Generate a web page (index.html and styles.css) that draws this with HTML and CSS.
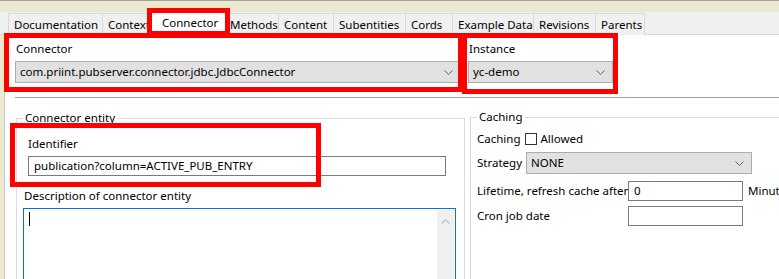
FILE: index.html
```html
<!DOCTYPE html>
<html>
<head>
<meta charset="utf-8">
<link rel="stylesheet" href="styles.css">
</head>
<body>
<div class="window">
  <div class="titlebar"></div>
  <div class="tabstrip">
    <div class="tab t-doc">Documentation</div>
    <div class="tab t-ctx">Context</div>
    <div class="tab t-con selected">Connector</div>
    <div class="tab t-met">Methods</div>
    <div class="tab t-cnt">Content</div>
    <div class="tab t-sub">Subentities</div>
    <div class="tab t-crd">Cords</div>
    <div class="tab t-exa">Example Data</div>
    <div class="tab t-rev">Revisions</div>
    <div class="tab t-par">Parents</div>
  </div>
  <div class="body">
    <div class="leftstrip"></div>
    <div class="page">
      <div class="row1">
        <div class="field f-connector">
          <div class="label">Connector</div>
          <div class="combo"><span>com.priint.pubserver.connector.jdbc.JdbcConnector</span><svg class="chev" width="9" height="5" viewBox="0 0 9 5"><path d="M0.5 0.5 L4.5 4.5 L8.5 0.5" fill="none" stroke="#606060" stroke-width="1"/></svg></div>
        </div>
        <div class="field f-instance">
          <div class="label">Instance</div>
          <div class="combo"><span>yc-demo</span><svg class="chev" width="9" height="5" viewBox="0 0 9 5"><path d="M0.5 0.5 L4.5 4.5 L8.5 0.5" fill="none" stroke="#606060" stroke-width="1"/></svg></div>
        </div>
      </div>
      <div class="sep"></div>
      <div class="groups">
        <fieldset class="grp entity">
          <legend>Connector entity</legend>
          <div class="ident">
            <div class="label">Identifier</div>
            <div class="input wide">publication?column=ACTIVE_PUB_ENTRY</div>
          </div>
          <div class="label desc">Description of connector entity</div>
          <div class="textarea">
            <div class="caret"></div>
            <div class="vscroll"><svg width="9" height="5" viewBox="0 0 9 5"><path d="M0.5 4.5 L4.5 0.8 L8.5 4.5" fill="none" stroke="#c0c0c0" stroke-width="1.4"/></svg></div>
          </div>
        </fieldset>
        <fieldset class="grp caching">
          <legend>Caching</legend>
          <div class="crow r-cache"><span class="label">Caching</span><span class="check"></span><span class="label">Allowed</span></div>
          <div class="crow r-strat"><span class="label">Strategy</span><div class="combo strat"><span>NONE</span><svg class="chev" width="9" height="5" viewBox="0 0 9 5"><path d="M0.5 0.5 L4.5 4.5 L8.5 0.5" fill="none" stroke="#606060" stroke-width="1"/></svg></div></div>
          <div class="crow r-life"><span class="label fixed">Lifetime, refresh cache after</span><div class="input small">0</div><span class="label unit">Minutes</span></div>
          <div class="crow r-cron"><span class="label fixed">Cron job date</span><div class="input small"></div></div>
        </fieldset>
      </div>
    </div>
  </div>
  <div class="mark m-tab"></div>
  <div class="mark m-conn"></div>
  <div class="mark m-inst"></div>
  <div class="mark m-ident"></div>
</div>
</body>
</html>
```
FILE: styles.css
```css
* { box-sizing: border-box; }
html, body { margin: 0; padding: 0; background: #fff; }
body {
  font-family: "Noto Sans", "Open Sans", sans-serif;
  font-size: 11.5px;
  color: #000;
}
.window {
  position: relative;
  width: 779px;
  height: 279px;
  overflow: hidden;
  background: #fff;
}
.titlebar {
  height: 12px;
  border-top: 1px solid #a0a0a0;
  background: #ede9cf;
}
.tabstrip {
  display: flex;
  align-items: flex-end;
  height: 23px;
  padding-left: 8px;
  background: #f0f0f0;
  border-bottom: 1px solid #d9d9d9;
}
.tab {
  flex: none;
  height: 22px;
  line-height: 21px;
  border: 1px solid #d9d9d9;
  border-bottom: none;
  background: #f0f0f0;
  margin-right: -1px;
  padding-left: 5px;
  white-space: nowrap;
  overflow: hidden;
  color: #000;
  margin-bottom: -1px;
}
.t-doc { width: 95px; }
.t-ctx { width: 52px; }
.t-con { width: 77px; }
.t-met { width: 55px; }
.t-cnt { width: 56px; }
.t-sub { width: 73px; }
.t-crd { width: 48px; }
.t-exa { width: 82px; }
.t-rev { width: 63px; }
.t-par { width: 50px; }
.tab.selected {
  position: relative;
  z-index: 1;
  height: 25px;
  line-height: 19px;
  padding-top: 2px;
  background: #fff;
  margin-left: -3px;
  margin-right: -3px;
  padding-left: 11px;
  border-bottom: 1px solid #fff;
}
.body {
  display: flex;
  height: 245px;
}
.leftstrip {
  flex: none;
  width: 5px;
  background: #ede9cf;
  border-right: 1px solid #c8c8c8;
}
.page {
  flex: 1;
  min-width: 0;
  padding: 5px 0 0 10px;
  background: #fff;
}
.row1 {
  display: flex;
  gap: 7px;
}
.label {
  height: 16px;
  line-height: 16px;
  white-space: nowrap;
}
.field .label { padding-left: 1px; margin-top: 1px; }
.combo {
  flex: none;
  display: flex;
  align-items: center;
  justify-content: space-between;
  height: 22px;
  margin-top: 4px;
  background: #e1e1e1;
  border: 1px solid #adadad;
  padding: 0 7px 0 4px;
}
.combo span { line-height: 20px; white-space: nowrap; }
.f-connector .combo { width: 446px; }
.f-instance .combo { width: 145px; }
.sep {
  margin-top: 14px;
  height: 1px;
  background: #a0a0a0;
}
.groups {
  display: flex;
  gap: 5px;
  margin-top: 12px;
  padding-left: 1px;
}
.grp {
  flex: none;
  margin: 0;
  border: 1px solid #dcdcdc;
  padding: 0 0 0 6px;
  height: 200px;
  min-width: 0;
}
.grp legend {
  padding: 0 2px;
  margin-left: 0;
  line-height: 16px;
  height: 16px;
}
.entity { width: 449px; }
.caching { width: 330px; margin-top: -1px; }
.ident {
  margin-left: 5px;
  padding-top: 10px;
}
.input {
  flex: none;
  height: 20px;
  line-height: 18px;
  border: 1px solid #7a7a7a;
  background: #fff;
  padding-left: 5px;
  white-space: nowrap;
}
.input.wide {
  margin-top: 4px;
  width: 418px;
}
.desc {
  margin-top: 12px;
  padding-left: 1px;
}
.textarea {
  position: relative;
  margin-top: 4px;
  width: 433px;
  height: 90px;
  border: 1px solid #0078d7;
  display: flex;
  justify-content: space-between;
  padding: 2px 1px 0 5px;
}
.caret {
  width: 1px;
  height: 14px;
  margin-top: 1px;
  background: #000;
}
.vscroll {
  width: 17px;
  margin-top: -1px;
  background: #f0f0f0;
  display: flex;
  justify-content: center;
  padding-top: 9px;
}
.vscroll svg { display: block; }
.crow {
  display: flex;
  align-items: center;
  white-space: nowrap;
}
.r-cache { margin-top: 6px; gap: 4px; height: 16px; }
.check {
  width: 12px;
  height: 12px;
  border: 1px solid #333;
  background: #fff;
}
.r-strat { margin-top: 5px; gap: 4px; }
.combo.strat { margin-top: 0; width: 226px; }
.r-life { margin-top: 7px; }
.r-cron { margin-top: 5px; }
.fixed { width: 151px; }
.input.small { width: 115px; }
.unit { margin-left: 5px; }
.mark {
  position: absolute;
  border: 5px solid #ff0000;
  z-index: 5;
}
.m-tab { left: 147px; top: 8px; width: 83px; height: 28px; }
.m-conn { left: 4px; top: 33px; width: 459px; height: 59px; }
.m-inst { left: 462px; top: 33px; width: 156px; height: 61px; }
.m-ident { left: 10px; top: 123px; width: 311px; height: 64px; }
```
